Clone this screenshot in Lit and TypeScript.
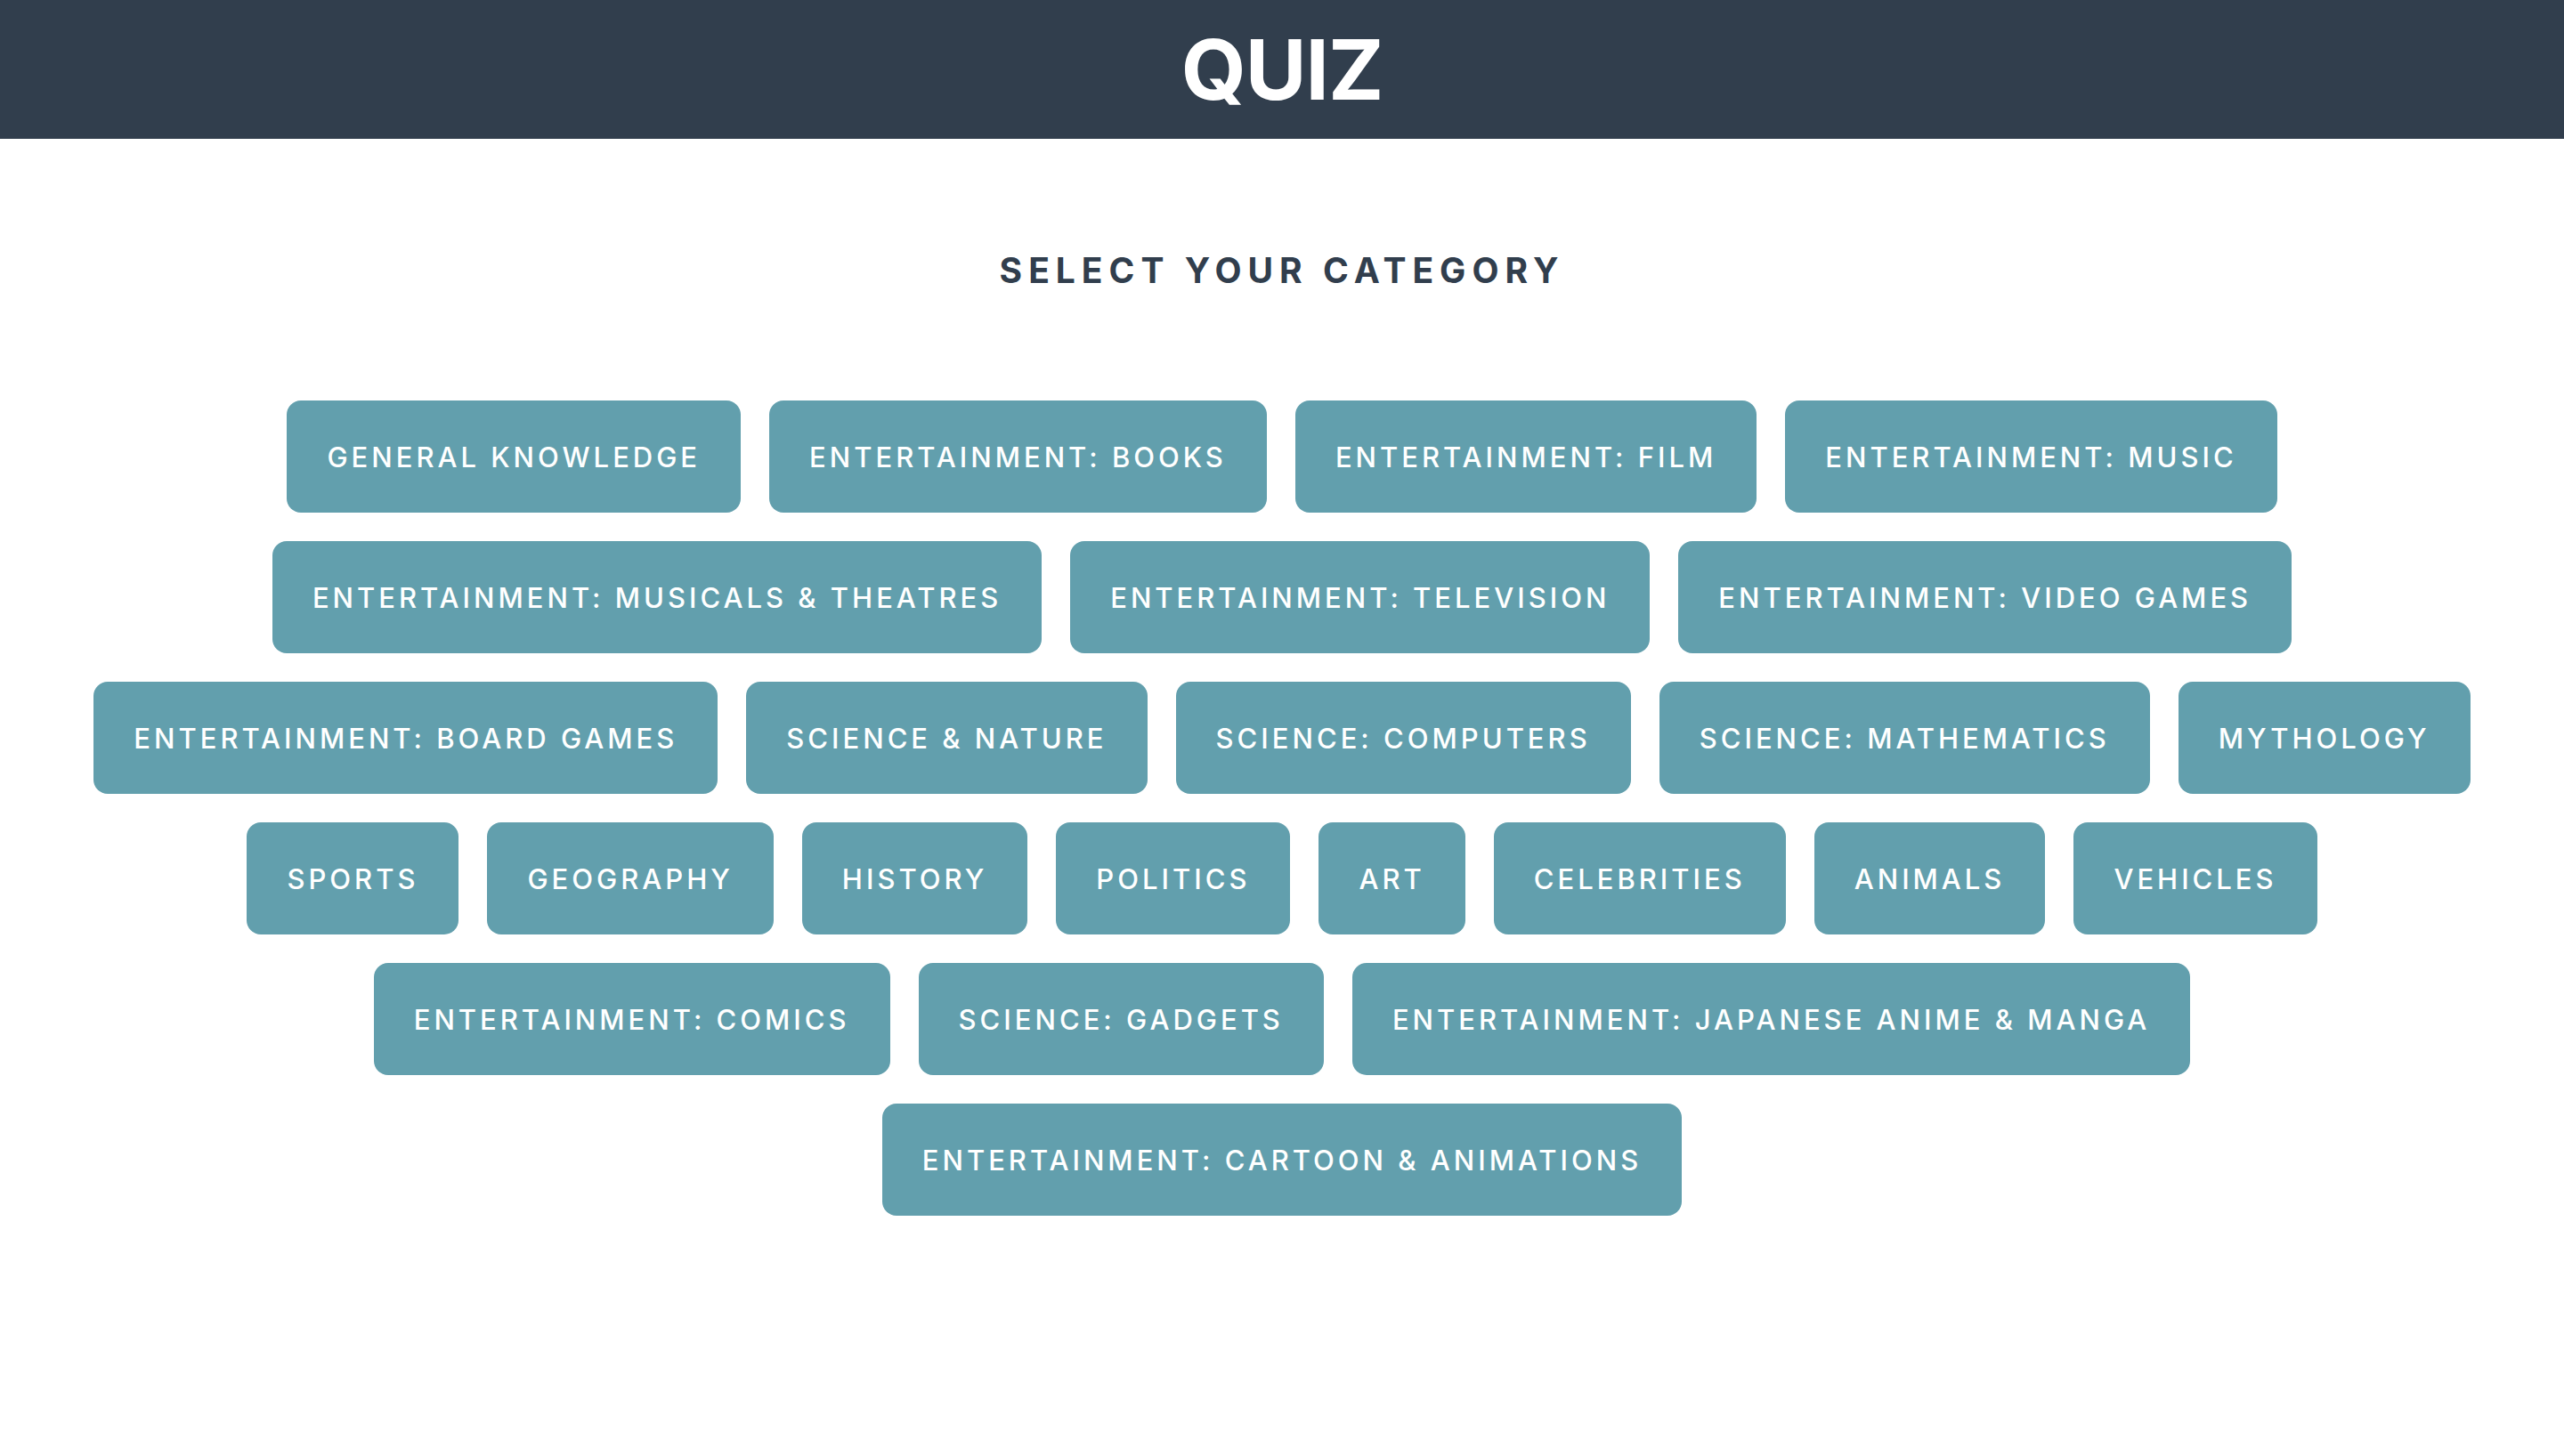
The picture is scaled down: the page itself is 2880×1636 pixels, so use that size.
import { LitElement, html, css } from "lit";
import { customElement, state } from "lit/decorators.js";

const CATEGORIES = [
  "General Knowledge",
  "Entertainment: Books",
  "Entertainment: Film",
  "Entertainment: Music",
  "Entertainment: Musicals & Theatres",
  "Entertainment: Television",
  "Entertainment: Video Games",
  "Entertainment: Board Games",
  "Science & Nature",
  "Science: Computers",
  "Science: Mathematics",
  "Mythology",
  "Sports",
  "Geography",
  "History",
  "Politics",
  "Art",
  "Celebrities",
  "Animals",
  "Vehicles",
  "Entertainment: Comics",
  "Science: Gadgets",
  "Entertainment: Japanese Anime & Manga",
  "Entertainment: Cartoon & Animations",
];

@customElement("app-root")
export class AppRoot extends LitElement {
  static styles = css`
    :host {
      display: block;
      min-height: 100vh;
      background: #ffffff;
      color: #313e4d;
      font-family: Inter, "Liberation Sans", sans-serif;
    }
    .header {
      display: flex;
      justify-content: center;
      padding: 20px 32px;
      background: #313e4d;
      color: #ffffff;
    }
    .title {
      margin: 0;
      font-size: 94px;
      line-height: 116px;
      font-weight: 700;
      letter-spacing: -1px;
    }
    .main {
      display: flex;
      flex-direction: column;
      align-items: center;
      gap: 122px;
      padding: 124px 96px;
    }
    .prompt {
      margin: 0;
      font-size: 39px;
      line-height: 48px;
      font-weight: 700;
      letter-spacing: 7px;
      text-transform: uppercase;
    }
    .categories {
      display: flex;
      flex-wrap: wrap;
      justify-content: center;
      gap: 32px;
      margin: 0;
      padding: 0;
      list-style: none;
    }
    .category {
      display: block;
      margin: 0;
      padding: 44px 45px 42px;
      border: 0;
      border-radius: 16px;
      background: #629fad;
      color: #ffffff;
      font-family: inherit;
      font-size: 31px;
      line-height: 40px;
      font-weight: 500;
      letter-spacing: 4px;
      text-transform: uppercase;
      cursor: pointer;
    }
  `;

  @state() private selected = "";

  render() {
    return html`
      <header class="header"><h1 class="title">QUIZ</h1></header>
      <main class="main">
        <h2 class="prompt">Select your category</h2>
        <ul class="categories">
          ${CATEGORIES.map(
            (name) => html`<li>
              <button
                class="category"
                type="button"
                aria-pressed=${this.selected === name ? "true" : "false"}
                @click=${() => (this.selected = name)}
              >${name}</button>
            </li>`,
          )}
        </ul>
      </main>
    `;
  }
}
